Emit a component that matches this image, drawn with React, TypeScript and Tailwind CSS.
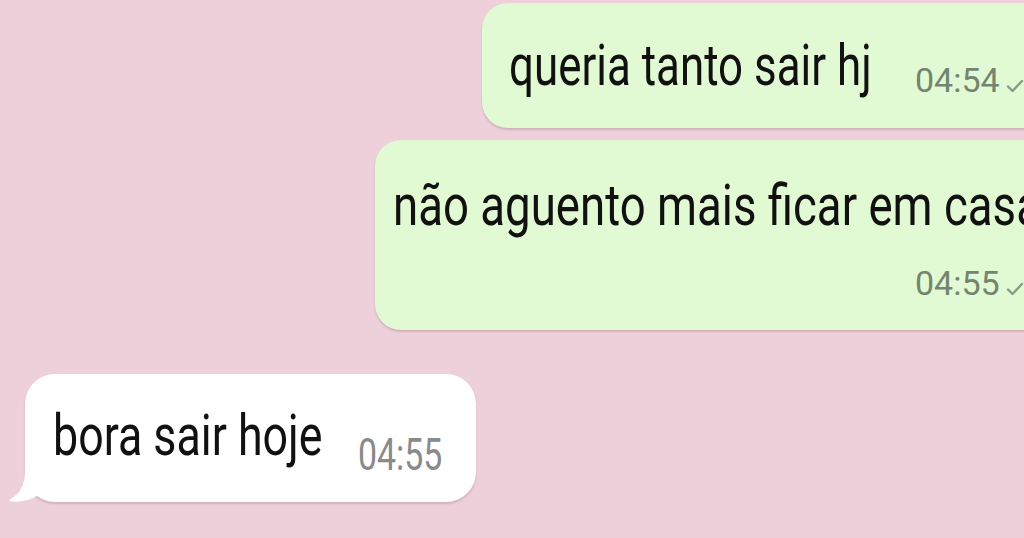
import React from 'react';

const Check = ({ color }: { color: string }) => (
  <svg width="18" height="14" viewBox="0 0 18 14" className="shrink-0">
    <path d="M2 7.5 L6.5 12 L16 2" fill="none" stroke={color} strokeWidth="2.4" strokeLinecap="round" strokeLinejoin="round" />
  </svg>
);

const Narrow = ({ children, className = '' }: { children: React.ReactNode; className?: string }) => (
  <span className={`inline-block origin-left whitespace-nowrap ${className}`}>{children}</span>
);

export default function App() {
  return (
    <div className="w-[1024px] h-[538px] overflow-hidden bg-[#eed0db] font-['Roboto',sans-serif] text-[#111]">
      <div className="flex flex-col pt-[3px]">
        {/* queria tanto sair hj */}
        <div className="ml-[482px] w-[600px] h-[125px] shrink-0 rounded-[26px] bg-[#e2fad3] shadow-[0_2px_2px_rgba(120,90,100,0.25)] pl-[27px] pt-[34px] flex items-start">
          <div className="w-[406px] shrink-0">
            <Narrow className="scale-x-[0.77] text-[57px] leading-none">queria tanto sair hj</Narrow>
          </div>
          <div className="mt-[26px] flex items-end gap-[6px]">
            <span className="text-[34px] leading-none text-[#738570]">04:54</span>
            <div className="mb-[4px]"><Check color="#8a9a86" /></div>
          </div>
        </div>

        {/* não aguento mais ficar em casa */}
        <div className="mt-[12px] ml-[375px] w-[700px] h-[190px] shrink-0 rounded-[26px] bg-[#e2fad3] shadow-[0_2px_2px_rgba(120,90,100,0.25)] pl-[18px] pt-[37px] flex flex-col">
          <Narrow className="scale-x-[0.8] text-[57px] leading-none">não aguento mais ficar em casa</Narrow>
          <div className="mt-[32px] ml-[522px] flex items-end gap-[6px]">
            <span className="text-[34px] leading-none text-[#738570]">04:55</span>
            <div className="mb-[4px]"><Check color="#8a9a86" /></div>
          </div>
        </div>

        {/* bora sair hoje */}
        <div className="relative mt-[44px] ml-[25px] w-[451px] h-[128px] shrink-0 rounded-[30px] bg-white shadow-[0_2px_2px_rgba(120,90,100,0.25)] pl-[28px] pt-[33px] flex items-start">
          <svg className="absolute left-[-17px] bottom-[-1px]" width="60" height="62" viewBox="0 0 60 62">
            <path d="M17 0 L17 30 C17 44 12 53 1 59 C3 61 8 61 14 60 C22 59 28 56 33 52 C38 58 46 61 60 61 L60 0 Z" fill="#ffffff" />
          </svg>
          <div className="relative w-[305px] shrink-0">
            <Narrow className="scale-x-[0.785] text-[57px] leading-none">bora sair hoje</Narrow>
          </div>
          <div className="relative mt-[26px]">
            <Narrow className="scale-x-[0.77] text-[44px] leading-none text-[#8a8a8a]">04:55</Narrow>
          </div>
        </div>
      </div>
    </div>
  );
}
